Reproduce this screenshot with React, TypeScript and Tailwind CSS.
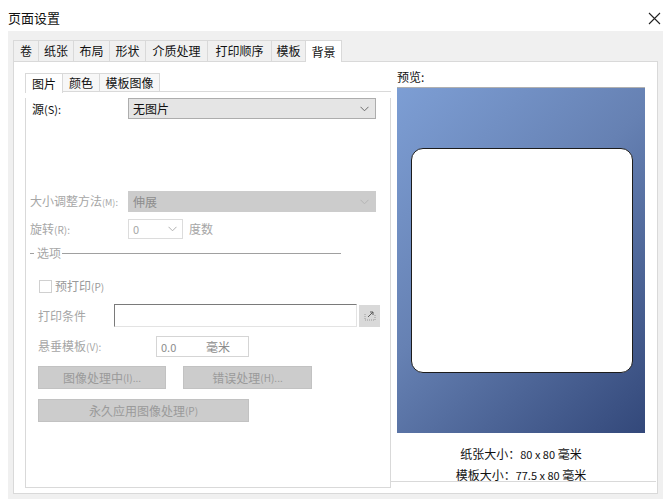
import React from "react";

const FONT = { fontFamily: '"Noto Sans CJK SC", "Noto Sans", sans-serif' };

function Chevron({ color = "#6b6b6b" }: { color?: string }) {
  return (
    <svg width="9" height="6" viewBox="0 0 9 6" fill="none">
      <polyline points="0.5,0.8 4.5,4.8 8.5,0.8" stroke={color} strokeWidth="1" />
    </svg>
  );
}

const tabs = [
  { t: "卷", w: "w-[25px]" },
  { t: "纸张", w: "w-[35px]" },
  { t: "布局", w: "w-[36px]" },
  { t: "形状", w: "w-[36px]" },
  { t: "介质处理", w: "w-[62px]" },
  { t: "打印顺序", w: "w-[64px]" },
  { t: "模板", w: "w-[34px]" },
];

export default function App() {
  return (
    <div className="w-[672px] h-[499px] bg-white overflow-hidden text-[12px] text-[#111]" style={FONT}>
      {/* title bar */}
      <div className="h-[31px] flex items-center justify-between pl-[8px] pr-[11px]">
        <span className="text-[13px] leading-[16px] mt-[4px]">页面设置</span>
        <svg width="13" height="13" viewBox="0 0 13 13" className="mt-[5px]">
          <path d="M1 1 L12 12 M12 1 L1 12" stroke="#222" strokeWidth="1.1" />
        </svg>
      </div>

      {/* gray body */}
      <div className="ml-[8px] w-[655px] h-[468px] bg-[#f0f0f0] pt-[9px] pl-[5px]">
        {/* main tabs */}
        <div className="flex h-[21px]">
          {tabs.map((x) => (
            <div
              key={x.t}
              className={`${x.w} h-[21px] border border-r-0 border-[#d9d9d9] border-b-0 flex items-center justify-center leading-[14px]`}
            >
              {x.t}
            </div>
          ))}
          <div className="w-[37px] h-[22px] bg-white border border-b-0 border-[#d9d9d9] flex items-center justify-center leading-[14px] relative z-10">
            背景
          </div>
        </div>

        {/* tab page */}
        <div className="w-[645px] h-[433px] bg-white border border-[#d9d9d9] flex">
          {/* left column */}
          <div className="pl-[11px] pt-[11px] w-[377px]">
            {/* sub tabs */}
            <div className="flex h-[19px]">
              <div className="w-[38px] h-[20px] bg-white border border-b-0 border-[#d9d9d9] flex items-center pl-[6px] leading-[14px] relative z-10">
                图片
              </div>
              <div className="w-[37px] h-[19px] bg-[#f7f7f7] border-t border-r border-b border-[#d9d9d9] flex items-center justify-center leading-[14px]">
                颜色
              </div>
              <div className="w-[60px] h-[19px] bg-[#f7f7f7] border-t border-r border-b border-[#d9d9d9] flex items-center justify-center leading-[14px]">
                模板图像
              </div>
              <div className="flex-1 border-b border-[#d9d9d9]" />
            </div>

            {/* sub panel */}
            <div className="w-[366px] h-[390px] border-l border-r border-b border-[#d9d9d9]">
              {/* source row */}
              <div className="mt-[6px] ml-[6px] flex items-center h-[21px]">
                <div className="w-[96px] leading-[14px]">
                  源<span className="text-[11px]">(S):</span>
                </div>
                <div className="w-[248px] h-[21px] bg-[#e5e5e5] border border-[#adadad] flex items-center justify-between pl-[4px] pr-[6px]">
                  <span className="leading-[14px]">无图片</span>
                  <Chevron />
                </div>
              </div>

              {/* resize row */}
              <div className="mt-[72px] ml-[4px] flex items-center h-[21px] text-[#a6a6a6]">
                <div className="w-[98px] leading-[14px] whitespace-nowrap">
                  大小调整方法<span className="text-[9px]">(M):</span>
                </div>
                <div className="w-[248px] h-[21px] bg-[#cccccc] border border-[#cccccc] flex items-center justify-between pl-[4px] pr-[6px]">
                  <span className="leading-[14px] text-[#8c8c8c]">伸展</span>
                  <Chevron color="#b5b5b5" />
                </div>
              </div>

              {/* rotate row */}
              <div className="mt-[7px] ml-[4px] flex items-center h-[20px] text-[#a6a6a6]">
                <div className="w-[98px] leading-[14px]">
                  旋转<span className="text-[10px]">(R):</span>
                </div>
                <div className="w-[55px] h-[20px] bg-white border border-[#dcdcdc] flex items-center justify-between pl-[4px] pr-[5px]">
                  <span className="leading-[14px] text-[11px]">0</span>
                  <Chevron color="#b0b0b0" />
                </div>
                <span className="ml-[6px] leading-[14px]">度数</span>
              </div>

              {/* group box title */}
              <div className="mt-[8px] ml-[4px] flex items-center h-[12px] text-[#a6a6a6]">
                <div className="w-[4px] h-px bg-[#a0a0a0]" />
                <span className="ml-[3px] leading-[12px]">选项</span>
                <div className="ml-[1px] w-[279px] h-px bg-[#a0a0a0]" />
              </div>

              {/* checkbox row */}
              <div className="mt-[21px] ml-[13px] flex items-center h-[13px] text-[#9a9a9a]">
                <div className="w-[13px] h-[13px] border border-[#d0d0d0] bg-white" />
                <span className="ml-[3px] leading-[14px]">
                  预打印<span className="text-[10px]">(P)</span>
                </span>
              </div>

              {/* print condition row */}
              <div className="mt-[11px] ml-[12px] flex items-center h-[23px] text-[#a6a6a6]">
                <div className="w-[76px] leading-[14px]">打印条件</div>
                <div className="w-[243px] h-[23px] bg-white border-t border-l border-[#7a7a7a] border-r border-b border-r-[#e3e3e3] border-b-[#e3e3e3]" />
                <div className="ml-[2px] w-[21px] h-[22px] bg-[#d9d9d9] flex items-center justify-center">
                  <svg width="12" height="11" viewBox="0 0 12 11" fill="none">
                    <path d="M1 4 L1 10 L11 10 L11 4" stroke="#9a9a9a" strokeWidth="1" strokeDasharray="1 1" />
                    <path d="M4 7 L9 2 M6 2 L9 2 L9 5" stroke="#5a5a5a" strokeWidth="1" />
                  </svg>
                </div>
              </div>

              {/* hang template row */}
              <div className="mt-[9px] ml-[12px] flex items-center h-[21px] text-[#a6a6a6]">
                <div className="w-[118px] leading-[14px]">
                  悬垂模板<span className="text-[10px]">(V):</span>
                </div>
                <div className="w-[93px] h-[21px] bg-white border border-[#d5d5d5] flex items-center pl-[4px]">
                  <span className="w-[45px] text-[11px] leading-[14px] text-[#8c8c8c]">0.0</span>
                  <span className="leading-[14px] text-[#8c8c8c]">毫米</span>
                </div>
              </div>

              {/* buttons row */}
              <div className="mt-[9px] ml-[12px] flex items-center h-[23px] text-[#9a9a9a]">
                <div className="w-[128px] h-[23px] bg-[#cccccc] border border-[#c2c2c2] flex items-center justify-center leading-[14px]">
                  图像处理中<span className="text-[10px]">(I)...</span>
                </div>
                <div className="ml-[17px] w-[129px] h-[23px] bg-[#cccccc] border border-[#c2c2c2] flex items-center justify-center leading-[14px]">
                  错误处理<span className="text-[10px]">(H)...</span>
                </div>
              </div>

              <div className="mt-[10px] ml-[12px] flex items-center h-[23px] text-[#9a9a9a]">
                <div className="w-[211px] h-[23px] bg-[#cccccc] border border-[#c2c2c2] flex items-center justify-center leading-[14px]">
                  永久应用图像处理<span className="text-[10px]">(P)</span>
                </div>
              </div>
            </div>
          </div>

          {/* right column */}
          <div className="w-[265px] h-[420px] border-b border-[#d9d9d9] pl-[6px] pt-[5px]">
            <div className="h-[20px] leading-[20px]">预览:</div>
            <div
              className="w-[248px] h-[346px] border-t border-[#b0b0b0] pt-[60px] pl-[14px]"
              style={{ background: "linear-gradient(135deg, #7d9ed4 0%, #6681b3 45%, #33487a 100%)" }}
            >
              <div className="w-[222px] h-[225px] bg-white border border-[#1c1c1c] rounded-[12px]" />
            </div>
            <div className="w-[248px] mt-[10px] flex flex-col items-center">
              <div className="h-[21px] leading-[21px] whitespace-nowrap">
                纸张大小：<span className="text-[11px]">80 x 80</span> 毫米
              </div>
              <div className="h-[21px] leading-[21px] whitespace-nowrap">
                模板大小：<span className="text-[11px]">77.5 x 80</span> 毫米
              </div>
            </div>
          </div>
        </div>
      </div>
    </div>
  );
}
